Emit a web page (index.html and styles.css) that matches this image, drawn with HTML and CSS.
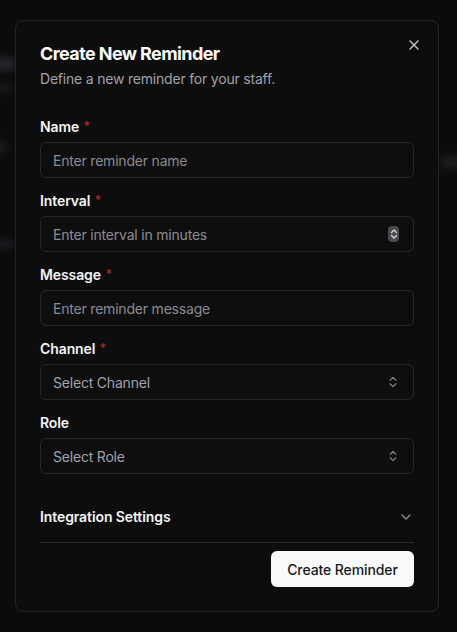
FILE: index.html
```html
<!DOCTYPE html>
<html lang="en">
<head>
<meta charset="utf-8">
<title>Create New Reminder</title>
<link rel="stylesheet" href="styles.css">
</head>
<body>
<div class="backdrop">
  <span class="ghost g1"></span>
  <span class="ghost g2"></span>
  <span class="ghost g3"></span>
  <span class="ghost g4"></span>
  <span class="ghost g5"></span>
</div>
<div class="dialog">
  <button class="close" aria-label="Close">
    <svg width="16" height="16" viewBox="0 0 24 24" fill="none" stroke="currentColor" stroke-width="2" stroke-linecap="round" stroke-linejoin="round"><path d="M18 6 6 18"/><path d="m6 6 12 12"/></svg>
  </button>
  <div class="header">
    <h2 class="title">Create New Reminder</h2>
    <p class="desc">Define a new reminder for your staff.</p>
  </div>
  <form class="form">
    <div class="field">
      <label class="label">Name <span class="req">*</span></label>
      <div class="input"><span class="ph">Enter reminder name</span></div>
    </div>
    <div class="field">
      <label class="label">Interval <span class="req">*</span></label>
      <div class="input"><span class="ph">Enter interval in minutes</span>
        <span class="spin">
          <svg width="8" height="12" viewBox="0 0 8 12" fill="none" stroke="#d4d4d4" stroke-width="1.4" stroke-linecap="round" stroke-linejoin="round"><path d="M1.5 4.5 4 2l2.5 2.5"/><path d="M1.5 7.5 4 10l2.5-2.5"/></svg>
        </span>
      </div>
    </div>
    <div class="field">
      <label class="label">Message <span class="req">*</span></label>
      <div class="input"><span class="ph">Enter reminder message</span></div>
    </div>
    <div class="field">
      <label class="label">Channel <span class="req">*</span></label>
      <div class="input select"><span class="ph sel">Select Channel</span>
        <svg class="updown" width="16" height="16" viewBox="0 0 24 24" fill="none" stroke="currentColor" stroke-width="2" stroke-linecap="round" stroke-linejoin="round"><path d="m7 15 5 5 5-5"/><path d="m7 9 5-5 5 5"/></svg>
      </div>
    </div>
    <div class="field">
      <label class="label">Role</label>
      <div class="input select"><span class="ph sel">Select Role</span>
        <svg class="updown" width="16" height="16" viewBox="0 0 24 24" fill="none" stroke="currentColor" stroke-width="2" stroke-linecap="round" stroke-linejoin="round"><path d="m7 15 5 5 5-5"/><path d="m7 9 5-5 5 5"/></svg>
      </div>
    </div>
    <div class="accordion">
      <span>Integration Settings</span>
      <svg class="chev" width="16" height="16" viewBox="0 0 24 24" fill="none" stroke="currentColor" stroke-width="2" stroke-linecap="round" stroke-linejoin="round"><path d="m6 9 6 6 6-6"/></svg>
    </div>
    <div class="footer">
      <button type="button" class="btn">Create Reminder</button>
    </div>
  </form>
</div>
</body>
</html>
```

FILE: styles.css
```css
* { box-sizing: border-box; }
html, body { margin: 0; padding: 0; }
body {
  background: #0b0b0d;
  font-family: Inter, "Noto Sans", sans-serif;
  color: #f5f5f5;
  width: 457px;
  height: 632px;
  overflow: hidden;
  position: relative;
  padding-top: 20px;
}
.backdrop { position: absolute; inset: 0; pointer-events: none; }
.ghost {
  position: absolute;
  background: #2a2a2e;
  filter: blur(4px);
  border-radius: 4px;
}
.g1 { left: -6px; top: 58px; width: 22px; height: 12px; }
.g2 { left: -6px; top: 84px; width: 20px; height: 8px; opacity: .6; }
.g3 { left: -8px; top: 140px; width: 14px; height: 14px; opacity: .6; }
.g4 { left: -6px; top: 240px; width: 22px; height: 8px; opacity: .7; }
.g5 { left: 440px; top: 157px; width: 24px; height: 10px; opacity: .7; }

.dialog {
  position: relative;
  margin-left: 15px;
  width: 424px;
  background: #0d0d0e;
  border: 1px solid #232326;
  border-radius: 8px;
  padding: 24px 24px 24px;
}
.close {
  position: absolute;
  top: 16px;
  right: 16px;
  width: 16px;
  height: 16px;
  padding: 0;
  border: 0;
  background: none;
  color: #c4c4c4;
  display: flex;
}
.header { display: flex; flex-direction: column; gap: 6px; }
.title {
  margin: 0;
  font-size: 18px;
  line-height: 18px;
  font-weight: 700;
  letter-spacing: -0.6px;
  color: #fafafa;
}
.desc {
  margin: 0;
  font-size: 14px;
  line-height: 20px;
  letter-spacing: -0.2px;
  color: #a1a1aa;
}
.form {
  margin-top: 31px;
  display: flex;
  flex-direction: column;
  gap: 16px;
}
.field { display: flex; flex-direction: column; gap: 8px; }
.label {
  display: block;
  height: 14px;
  font-size: 14px;
  line-height: 14px;
  font-weight: 600;
  letter-spacing: -0.1px;
  color: #f4f4f5;
}
.req { color: #a8242a; font-size: 12px; line-height: 0; vertical-align: 2px; margin-left: 1px; }
.input {
  height: 36px;
  border: 1px solid #27272a;
  border-radius: 6px;
  background: #0e0e0f;
  padding: 0 12px;
  display: flex;
  align-items: center;
  justify-content: space-between;
}
.ph {
  font-size: 14px;
  letter-spacing: -0.2px;
  color: #8b8b92;
}
.ph.sel { color: #a1a1aa; }
.spin {
  width: 11px;
  height: 16px;
  border-radius: 4px;
  background: #4a4a4e;
  display: flex;
  align-items: center;
  justify-content: center;
  margin-right: 2px;
}
.updown { color: #fafafa; opacity: .5; margin-right: 1px; width: 14px; height: 14px; }
.accordion {
  height: 53px;
  padding-top: 1px;
  border-bottom: 1px solid #27272a;
  display: flex;
  align-items: center;
  justify-content: space-between;
  font-size: 14px;
  font-weight: 600;
  letter-spacing: -0.1px;
  color: #f4f4f5;
}
.chev { color: #8b8b92; margin-right: 0; }
.footer {
  display: flex;
  justify-content: flex-end;
  margin-top: -8px;
}
.btn {
  height: 36px;
  width: 143px;
  background: #fafafa;
  color: #18181b;
  border: 0;
  border-radius: 6px;
  font-family: Inter, "Noto Sans", sans-serif;
  font-size: 14px;
  font-weight: 500;
  letter-spacing: -0.1px;
}
```
